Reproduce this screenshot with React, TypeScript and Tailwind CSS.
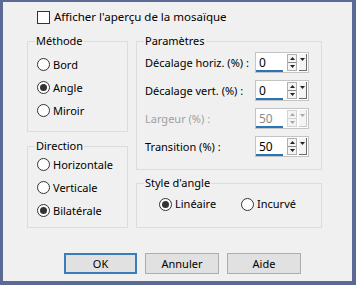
import React from "react";

const font = { fontFamily: '"Noto Sans", "Open Sans", sans-serif' };

function Radio({ checked, label }: { checked?: boolean; label: string }) {
  return (
    <div className="flex items-center">
      <span className="flex h-[13px] w-[13px] items-center justify-center rounded-full border border-[#333333] bg-white">
        {checked && <span className="h-[7px] w-[7px] rounded-full bg-[#333333]" />}
      </span>
      <span className="ml-[3px]">{label}</span>
    </div>
  );
}

function Group({ title, className, children }: { title: string; className: string; children: React.ReactNode }) {
  return (
    <div className={"relative border border-[#dcdcdc] " + className}>
      <span className="absolute left-[7px] top-[-9px] bg-[#f0f0f0] px-[1px] leading-[16px]">{title}</span>
      {children}
    </div>
  );
}

function Spin({ value, disabled }: { value: string; disabled?: boolean }) {
  const arrow = disabled ? "#a8a8a8" : "#222222";
  return (
    <div className="flex h-[21px] w-[54px] shrink-0 items-start border border-[#c4c4c4] bg-white pt-[1px]">
      <div className="relative h-[18px] w-[28px]">
        <span className={"absolute left-[3px] top-[1px] text-[12px] leading-[16px] " + (disabled ? "text-[#8a8a8a]" : "text-black")}>{value}</span>
        <span className="absolute bottom-[0px] left-[0px] h-[2px] w-[27px] bg-[#2a73b4]" />
      </div>
      <div className={"ml-[3px] flex h-[17px] w-[10px] flex-col border " + (disabled ? "border-[#d4d4d4]" : "border-[#b0b0b0]") + " bg-[#f4f4f4]"}>
        <div className="flex h-[7px] items-center justify-center">
          <svg width="5" height="3" viewBox="0 0 5 3"><polygon points="0,3 5,3 2.5,0" fill={arrow} /></svg>
        </div>
        <div className={"h-[1px] " + (disabled ? "bg-[#d4d4d4]" : "bg-[#8a8a8a]")} />
        <div className="flex h-[7px] items-center justify-center">
          <svg width="5" height="3" viewBox="0 0 5 3"><polygon points="0,0 5,0 2.5,3" fill={arrow} /></svg>
        </div>
      </div>
      <div className={"ml-[2px] flex h-[17px] w-[8px] justify-center border-b border-r bg-[#f4f4f4] pt-[4px] " + (disabled ? "border-[#c8c8c8]" : "border-[#6a6a6a]")}>
        <svg width="5" height="3" viewBox="0 0 5 3"><polygon points="0,0 5,0 2.5,3" fill={arrow} /></svg>
      </div>
    </div>
  );
}

function Row({ label, value, disabled }: { label: string; value: string; disabled?: boolean }) {
  return (
    <div className="flex h-[21px] items-center justify-between">
      <span className={"whitespace-nowrap " + (disabled ? "text-[#a0a0a0]" : "text-black")}>{label}</span>
      <Spin value={value} disabled={disabled} />
    </div>
  );
}

export default function App() {
  return (
    <div className="h-[285px] w-[356px] bg-[#5b6a92] pb-[4px] pl-[3px] pr-[4px] pt-[2px]" style={font}>
      <div className="h-full w-full overflow-hidden whitespace-nowrap bg-[#f0f0f0] text-[11px] leading-[16px] text-black">
        <div className="ml-[34px] mt-[7px] flex h-[16px] items-center">
          <span className="h-[13px] w-[13px] border border-[#333333] bg-white" />
          <span className="ml-[4px] text-[11.5px]">Afficher l'aperçu de la mosaïque</span>
        </div>

        <div className="ml-[24px] mt-[16px] flex gap-[8px]">
          <div className="flex w-[101px] flex-col">
            <Group title="Méthode" className="h-[91px] pl-[9px] pt-[11px]">
              <div className="flex h-[23px] items-center"><Radio label="Bord" /></div>
              <div className="flex h-[23px] items-center"><Radio label="Angle" checked /></div>
              <div className="flex h-[23px] items-center"><Radio label="Miroir" /></div>
            </Group>
            <Group title="Direction" className="mt-[14px] h-[82px] pl-[9px] pt-[6px]">
              <div className="flex h-[23px] items-center"><Radio label="Horizontale" /></div>
              <div className="flex h-[23px] items-center"><Radio label="Verticale" /></div>
              <div className="flex h-[23px] items-center"><Radio label="Bilatérale" checked /></div>
            </Group>
          </div>

          <div className="flex w-[186px] flex-col">
            <Group title="Paramètres" className="flex h-[129px] flex-col gap-[7px] pl-[8px] pr-[12px] pt-[10px]">
              <Row label="Décalage horiz. (%) :" value="0" />
              <Row label="Décalage vert. (%) :" value="0" />
              <Row label="Largeur (%) :" value="50" disabled />
              <Row label="Transition (%) :" value="50" />
            </Group>
            <Group title="Style d'angle" className="mt-[13px] h-[45px] pl-[22px] pt-[10px]">
              <div className="flex h-[20px] items-center">
                <div className="w-[82px]"><Radio label="Linéaire" checked /></div>
                <Radio label="Incurvé" />
              </div>
            </Group>
          </div>
        </div>

        <div className="ml-[61px] mt-[25px] flex gap-[8px]">
          <button className="h-[21px] w-[73px] border-2 border-[#3b7dbb] bg-[#e1e1e1] leading-[16px]">OK</button>
          <button className="h-[21px] w-[74px] border border-[#adadad] bg-[#e1e1e1] leading-[16px]">Annuler</button>
          <button className="h-[21px] w-[74px] border border-[#adadad] bg-[#e1e1e1] leading-[16px]">Aide</button>
        </div>
      </div>
    </div>
  );
}
